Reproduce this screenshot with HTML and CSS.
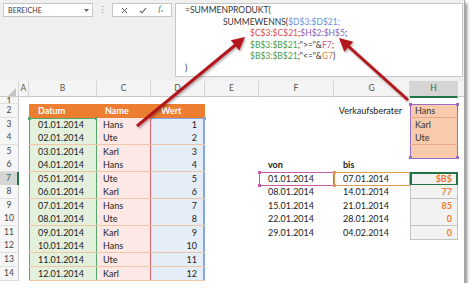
FILE: index.html
```html
<!DOCTYPE html>
<html lang="de">
<head>
<meta charset="utf-8">
<title>SUMMENPRODUKT</title>
<link rel="stylesheet" href="styles.css">
</head>
<body>
<div class="shot">
  <div class="fbar">
    <div class="namebox"><span>BEREICHE</span><svg class="dd" width="5" height="3" viewBox="0 0 5 3"><path d="M0 0H5L2.5 3Z" fill="#666"/></svg></div>
    <div class="dots">&#8942;</div>
    <div class="btns">
      <svg width="7" height="7" viewBox="0 0 7 7"><path d="M1 1L6 6M6 1L1 6" stroke="#555" stroke-width="1"/></svg>
      <svg width="8" height="7" viewBox="0 0 8 7"><path d="M1 3.8L3 5.8L7 1" stroke="#555" stroke-width="1.1" fill="none"/></svg>
      <span class="fx"><i>f</i><sub>x</sub></span>
    </div>
    <div class="formula">
      <div class="fl">=SUMMENPRODUKT(</div>
      <div class="fl i1">SUMMEWENNS(<span class="cb">$D$3:$D$21;</span></div>
      <div class="fl i2"><span class="cr">$C$3:$C$21</span>;<span class="cp">$H$2:$H$5</span>;</div>
      <div class="fl i2"><span class="cg">$B$3:$B$21</span>;"&gt;="&amp;<span class="cm">F7</span>;</div>
      <div class="fl i2"><span class="cg">$B$3:$B$21</span>;"&lt;="&amp;<span class="co">G7</span>)</div>
      <div class="fl">)</div>
    </div>
  </div>

  <div class="sheet">
    <div class="row hdr">
      <div class="corner"><svg width="8" height="8" viewBox="0 0 8 8"><path d="M8 0V8H0Z" fill="#c3c3c3"/></svg></div>
      <div class="ch">A</div><div class="ch">B</div><div class="ch">C</div><div class="ch">D</div><div class="ch">E</div><div class="ch">F</div><div class="ch">G</div><div class="ch sel">H</div><div class="ch last"></div>
    </div>
    <div class="row r1">
      <div class="rh">1</div><div></div><div></div><div></div><div></div><div></div><div></div><div></div><div></div><div></div>
    </div>
    <div class="row">
      <div class="rh">2</div><div></div><div class="c th tb">Datum</div><div class="c th">Name</div><div class="c th td">Wert</div><div></div><div></div><div class="c right g2">Verkaufsberater</div><div class="c h hfirst">Hans<i class="hd tl"></i><i class="hd tr"></i></div><div></div>
    </div>
    <div class="row">
      <div class="rh">3</div><div></div><div class="c b bfirst">01.01.2014<i class="gd tl"></i><i class="gd tr"></i></div><div class="c n">Hans</div><div class="c d dfirst">1<i class="bd tr"></i></div><div></div><div></div><div></div><div class="c h">Karl</div><div></div>
    </div>
    <div class="row">
      <div class="rh">4</div><div></div><div class="c b">02.01.2014</div><div class="c n">Ute</div><div class="c d">2</div><div></div><div></div><div></div><div class="c h">Ute</div><div></div>
    </div>
    <div class="row">
      <div class="rh">5</div><div></div><div class="c b">03.01.2014</div><div class="c n">Karl</div><div class="c d">3</div><div></div><div></div><div></div><div class="c h hlast"><i class="hd bl"></i><i class="hd br"></i></div><div></div>
    </div>
    <div class="row">
      <div class="rh">6</div><div></div><div class="c b">04.01.2014</div><div class="c n">Hans</div><div class="c d">4</div><div></div><div class="c f bold">von</div><div class="c g bold">bis</div><div></div><div></div>
    </div>
    <div class="row">
      <div class="rh rsel">7</div><div></div><div class="c b">05.01.2014</div><div class="c n">Ute</div><div class="c d">5</div><div></div><div class="c f f7">01.01.2014<i class="md tl"></i><i class="md bl"></i></div><div class="c g g7">07.01.2014<i class="od tl"></i><i class="od bl"></i></div><div class="c res active">$B$</div><div></div>
    </div>
    <div class="row">
      <div class="rh">8</div><div></div><div class="c b">06.01.2014</div><div class="c n">Karl</div><div class="c d">6</div><div></div><div class="c f">08.01.2014</div><div class="c g">14.01.2014</div><div class="c res">77</div><div></div>
    </div>
    <div class="row">
      <div class="rh">9</div><div></div><div class="c b">07.01.2014</div><div class="c n">Hans</div><div class="c d">7</div><div></div><div class="c f">15.01.2014</div><div class="c g">21.01.2014</div><div class="c res">85</div><div></div>
    </div>
    <div class="row">
      <div class="rh">10</div><div></div><div class="c b">08.01.2014</div><div class="c n">Ute</div><div class="c d">8</div><div></div><div class="c f">22.01.2014</div><div class="c g">28.01.2014</div><div class="c res">0</div><div></div>
    </div>
    <div class="row">
      <div class="rh">11</div><div></div><div class="c b">09.01.2014</div><div class="c n">Karl</div><div class="c d">9</div><div></div><div class="c f">29.01.2014</div><div class="c g">04.02.2014</div><div class="c res">0</div><div></div>
    </div>
    <div class="row">
      <div class="rh">12</div><div></div><div class="c b">10.01.2014</div><div class="c n">Hans</div><div class="c d">10</div><div></div><div></div><div></div><div></div><div></div>
    </div>
    <div class="row">
      <div class="rh">13</div><div></div><div class="c b">11.01.2014</div><div class="c n">Ute</div><div class="c d">11</div><div></div><div></div><div></div><div></div><div></div>
    </div>
    <div class="row">
      <div class="rh">14</div><div></div><div class="c b">12.01.2014</div><div class="c n">Karl</div><div class="c d">12</div><div></div><div></div><div></div><div></div><div></div>
    </div>
  </div>

  <svg class="arrows" width="465" height="282" viewBox="0 0 465 282">
    <defs>
      <filter id="sh" x="-20%" y="-20%" width="140%" height="140%">
        <feDropShadow dx="1" dy="1.5" stdDeviation="1" flood-color="#000" flood-opacity="0.35"/>
      </filter>
    </defs>
    <g filter="url(#sh)" fill="#b3161b" stroke="#b3161b">
      <line x1="137" y1="126" x2="236" y2="44.5" stroke-width="3"/>
      <polygon points="245,37 239.3,50.5 230.8,40.2" stroke="none"/>
      <line x1="408" y1="100" x2="348" y2="46" stroke-width="3"/>
      <polygon points="339,38 353.2,41.8 344.3,51.7" stroke="none"/>
    </g>
  </svg>
</div>
</body>
</html>
```

FILE: styles.css
```css
* { box-sizing: border-box; }
body {
  margin: 0;
  background: #fff;
  font-family: Lato, "Liberation Sans", sans-serif;
  color: #222;
}
.shot {
  position: relative;
  width: 465px;
  height: 283px;
  overflow: hidden;
  background: #fff;
  border-right: 1px solid #a9a9a9;
  box-shadow: 2px 3px 3px rgba(0, 0, 0, 0.45);
}

/* formula bar */
.fbar {
  height: 81px;
  background: #efefef;
  display: flex;
  align-items: flex-start;
  padding: 3px 1px 0 3px;
}
.namebox {
  width: 90px;
  height: 14px;
  background: #fff;
  border: 1px solid #c6c6c6;
  display: flex;
  align-items: center;
  justify-content: space-between;
  padding: 0 3px 0 4px;
  font-size: 7px;
  color: #333;
  letter-spacing: 0.1px;
}
.dots {
  width: 19px;
  text-align: center;
  color: #8a8a8a;
  font-size: 9px;
  line-height: 14px;
}
.btns {
  width: 60px;
  height: 14px;
  background: #fff;
  border: 1px solid #c6c6c6;
  display: flex;
  justify-content: space-around;
  align-items: center;
  padding: 0 2px;
}
.fx {
  font-family: "Liberation Serif", serif;
  font-size: 8px;
  color: #555;
  line-height: 8px;
}
.fx sub { font-size: 5px; vertical-align: -1px; }
.formula {
  flex: 1;
  margin-left: 3px;
  height: 74px;
  background: #fff;
  border: 1px solid #c6c6c6;
  padding: 1px 0 0 9px;
  font-size: 8.5px;
  line-height: 11.5px;
  color: #333;
  white-space: nowrap;
}
.fl.i1 { padding-left: 38px; }
.fl.i2 { padding-left: 65px; }
.cb { color: #6c8fdc; }
.cr { color: #e14b52; }
.cp { color: #8d5dbd; }
.cg { color: #3f9c52; }
.cm { color: #c8559b; }
.co { color: #e08a3c; }

/* sheet */
.sheet {
  font-size: 9px;
}
.row {
  display: grid;
  grid-template-columns: 19px 10px 68px 54px 54px 54px 75px 76px 48px 1fr;
  height: 13.55px;
}
.row.hdr { height: 16px; background: #f4f4f4; border-bottom: 1px solid #c9c9c9; }
.row.r1 { height: 7px; overflow: hidden; }
.corner {
  display: flex;
  align-items: flex-end;
  justify-content: flex-end;
  padding: 0 2px 2px 0;
  border-right: 1px solid #d6d6d6;
}
.ch {
  text-align: center;
  color: #555;
  line-height: 15px;
  font-size: 8.5px;
  border-right: 1px solid #d6d6d6;
}
.ch.sel {
  background: #d5d5d5;
  color: #217346;
  border-bottom: 2px solid #217346;
}
.ch.last { border-right: none; }
.rh {
  background: #f6f6f6;
  border-right: 1px solid #c9c9c9;
  border-bottom: 1px solid #e0e0e0;
  text-align: center;
  color: #444;
  font-size: 8.5px;
  line-height: 13px;
}
.r1 .rh { line-height: 9px; height: 7px; overflow: hidden; }
.rh.rsel {
  background: #d5d5d5;
  color: #217346;
  border-right: 2px solid #217346;
}
.c {
  position: relative;
  white-space: nowrap;
  line-height: 13px;
  padding-left: 8px;
}
.right { text-align: right; padding: 0 8px 0 0; }
.bold { font-weight: 700; }

/* table */
.th {
  background: #ed7d31;
  color: #fff;
  font-weight: 700;
}
.th.tb { padding-left: 9px; }
.th.td { padding-left: 10px; }
.b {
  background: #e3f0dc;
  padding-left: 9px;
  border-bottom: 1px solid #f1c6a6;
  box-shadow: inset 1px 0 #55a66b, inset -1px 0 #55a66b;
}
.b.bfirst { box-shadow: inset 1px 0 #55a66b, inset -1px 0 #55a66b, inset 0 1px #55a66b; }
.n {
  background: #fde8e6;
  padding-left: 6px;
  border-bottom: 1px solid #f1c6a6;
  box-shadow: inset -1px 0 #e5636a;
}
.d {
  background: #e5edf8;
  text-align: right;
  padding: 0 8px 0 0;
  border-bottom: 1px solid #f1c6a6;
  box-shadow: inset -2px 0 #86a6e2;
}
.d.dfirst { box-shadow: inset -2px 0 #86a6e2, inset 0 1px #86a6e2; }

/* H2:H5 */
.h {
  background: #f8cbad;
  padding-left: 5px;
  color: #333;
  border-bottom: 1px solid #eaa985;
  box-shadow: inset 1px 0 #9a6cc6, inset -1px 0 #9a6cc6;
}
.h.hfirst { box-shadow: inset 1px 0 #9a6cc6, inset -1px 0 #9a6cc6, inset 0 1px #9a6cc6; }
.h.hlast { border-bottom: 1px solid #9a6cc6; }

/* F / G */
.f { padding-left: 9px; }
.g { padding-left: 9px; }
.f7 { box-shadow: inset 0 0 0 1px #c95ba2; }
.g7 { box-shadow: inset 0 0 0 1px #e39a50; }

/* results */
.res {
  background: #f2f2f2;
  border: 1px solid #c3c3c3;
  border-top: none;
  text-align: right;
  padding: 0 5px 0 0;
  color: #ed7d31;
  font-weight: 700;
}
.res.active {
  border: 2px solid #217346;
  line-height: 10px;
  padding-right: 4px;
}

/* corner handles */
.c i {
  position: absolute;
  width: 3px;
  height: 3px;
}
.tl { left: -1px; top: -1px; }
.tr { right: -1px; top: -1px; }
.bl { left: -1px; bottom: -1px; }
.br { right: -1px; bottom: -1px; }
.gd { background: #55a66b; }
.bd { background: #86a6e2; }
.hd { background: #9a6cc6; }
.md { background: #c95ba2; }
.od { background: #e39a50; }

.arrows {
  position: absolute;
  left: 0;
  top: 0;
  pointer-events: none;
}
```
